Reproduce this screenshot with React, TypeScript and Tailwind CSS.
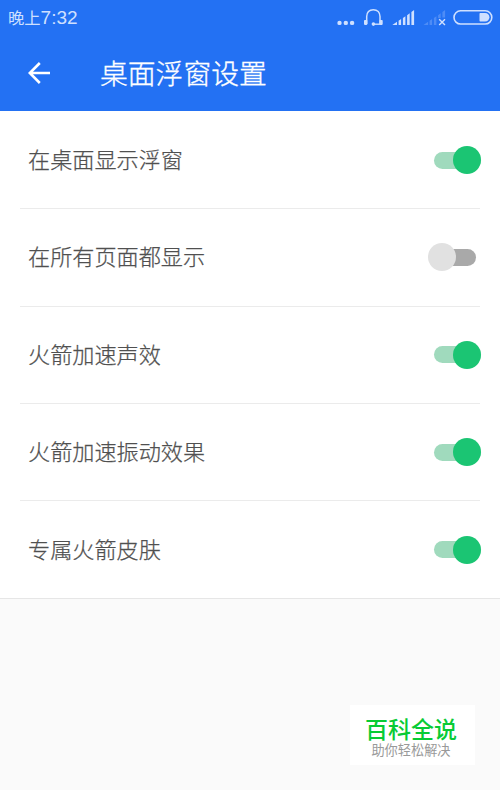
import { useState } from "react";
import clsx from "clsx";

const OPTIONS = [
  { label: "在桌面显示浮窗", enabled: true },
  { label: "在所有页面都显示", enabled: false },
  { label: "火箭加速声效", enabled: true },
  { label: "火箭加速振动效果", enabled: true },
  { label: "专属火箭皮肤", enabled: true },
];

function StatusIcons() {
  return (
    <svg width="164" height="36" viewBox="336 0 164 36" fill="none" className="text-[#cfe0ff]">
      {/* more */}
      <g fill="currentColor">
        <circle cx="339.5" cy="22.9" r="2.2" />
        <circle cx="345.8" cy="22.9" r="2.2" />
        <circle cx="352.1" cy="22.9" r="2.2" />
      </g>
      {/* headset */}
      <path
        d="M366.7 24V16.5C366.7 12.4 369.2 9.7 373.3 9.7C377.4 9.7 380 12.4 380 16.5V24"
        stroke="currentColor"
        strokeWidth="1.5"
      />
      <path d="M374 24.2H380" stroke="currentColor" strokeWidth="1.4" />
      <rect x="364" y="20" width="3.3" height="4.9" rx="0.8" fill="currentColor" />
      <rect x="379.4" y="20" width="3.3" height="4.9" rx="0.8" fill="currentColor" />
      <circle cx="373.4" cy="24.1" r="1.8" fill="currentColor" />
      {/* signal */}
      <path
        d="M392.3 25L397 21.7V25ZM398.6 20.8L401.1 19V25H398.6ZM402.9 18L405.4 16.2V25H402.9ZM407.1 15.2L409.7 13.2V25H407.1ZM411.4 12L414.1 10V25H411.4Z"
        fill="currentColor"
      />
      {/* no sim */}
      <path
        d="M423.5 25L428.1 21.7V25ZM429.6 20.8L432.1 19V25H429.6ZM433.9 18L436.4 16.2V25H433.9ZM438.1 15.2L440.7 13.2V18H438.1ZM442.4 12L445.1 10V17.5H442.4Z"
        fill="currentColor"
        opacity="0.25"
      />
      <path d="M439.2 19.2L445 25M445 19.2L439.2 25" stroke="currentColor" strokeWidth="1.4" />
      {/* battery */}
      <rect x="454" y="10.8" width="37.8" height="13.2" rx="6.6" stroke="currentColor" strokeWidth="1.6" />
      <path
        d="M480.5 13H485C487.8 13 489.4 15 489.4 17.2C489.4 19.4 487.8 21.5 485 21.5H480.5C479.8 21.5 479.5 21.1 479.5 20.5V14C479.5 13.4 479.8 13 480.5 13Z"
        fill="currentColor"
      />
    </svg>
  );
}

function Toggle({ checked, onChange }: { checked: boolean; onChange: () => void }) {
  return (
    <button
      type="button"
      role="switch"
      aria-checked={checked}
      onClick={onChange}
      className={clsx("flex h-7 w-[53px] items-center", checked ? "justify-end" : "justify-start")}
    >
      <span
        className={clsx(
          "flex h-[17px] items-center rounded-full",
          checked
            ? "w-[47px] justify-end bg-[#a0dabd]"
            : "w-12 justify-start bg-[linear-gradient(to_right,transparent_14px,#a9a9a9_14px)]"
        )}
      >
        <span className={clsx("size-7 shrink-0 rounded-full", checked ? "bg-[#1bc573]" : "bg-[#e1e1e1]")} />
      </span>
    </button>
  );
}

export default function App() {
  const [options, setOptions] = useState(OPTIONS);

  const toggle = (index: number) =>
    setOptions(options.map((o, i) => (i === index ? { ...o, enabled: !o.enabled } : o)));

  return (
    <div className="flex h-[790px] w-[500px] flex-col overflow-hidden bg-[#fafafa] font-['Liberation_Sans','Noto_Sans_CJK_SC',sans-serif]">
      <header className="h-[111px] shrink-0 bg-[#2371f3]">
        <div className="flex h-9 items-center justify-between pl-2">
          <span className="flex items-baseline text-[19px] leading-9 text-[#cfe0ff]">
            <span className="text-[16.3px]">晚上</span>7:32
          </span>
          <StatusIcons />
        </div>
        <div className="flex h-[74px] items-center pl-7">
          <svg width="23" height="22" viewBox="0 0 23 22" fill="none" stroke="white" strokeWidth="2.6">
            <path d="M22 11H2M11.8 1L1.8 11L11.8 21" />
          </svg>
          <h1 className="ml-[49px] pt-[3px] text-[27.8px] font-light leading-none text-white [-webkit-text-stroke:0.35px_white]">
            桌面浮窗设置
          </h1>
        </div>
      </header>

      <main className="h-[488px] shrink-0 border-b border-[#e6e6e6] bg-white pt-px">
        {options.map((o, i) => (
          <div key={o.label} className="h-[97.3px] px-5">
            <div
              className={clsx(
                "flex h-full items-center justify-between pl-2",
                i < options.length - 1 && "border-b border-[#ebebeb]"
              )}
            >
              <span className="pt-0.5 text-[22.15px] font-light leading-none text-[#505050] [-webkit-text-stroke:0.25px_#505050]">
                {o.label}
              </span>
              <div className="-mr-[1px]">
                <Toggle checked={o.enabled} onChange={() => toggle(i)} />
              </div>
            </div>
          </div>
        ))}
      </main>

      <footer className="flex flex-1 items-end justify-end pr-[25px] pb-[25px]">
        <div className="flex h-[60px] w-[125px] flex-col items-center bg-white pt-3 pr-[3px]">
          <div className="text-[23px] font-medium leading-[26px] text-[#08cb35]">百科全说</div>
          <div className="text-[13.2px] leading-4 text-[#999]">助你轻松解决</div>
        </div>
      </footer>
    </div>
  );
}
